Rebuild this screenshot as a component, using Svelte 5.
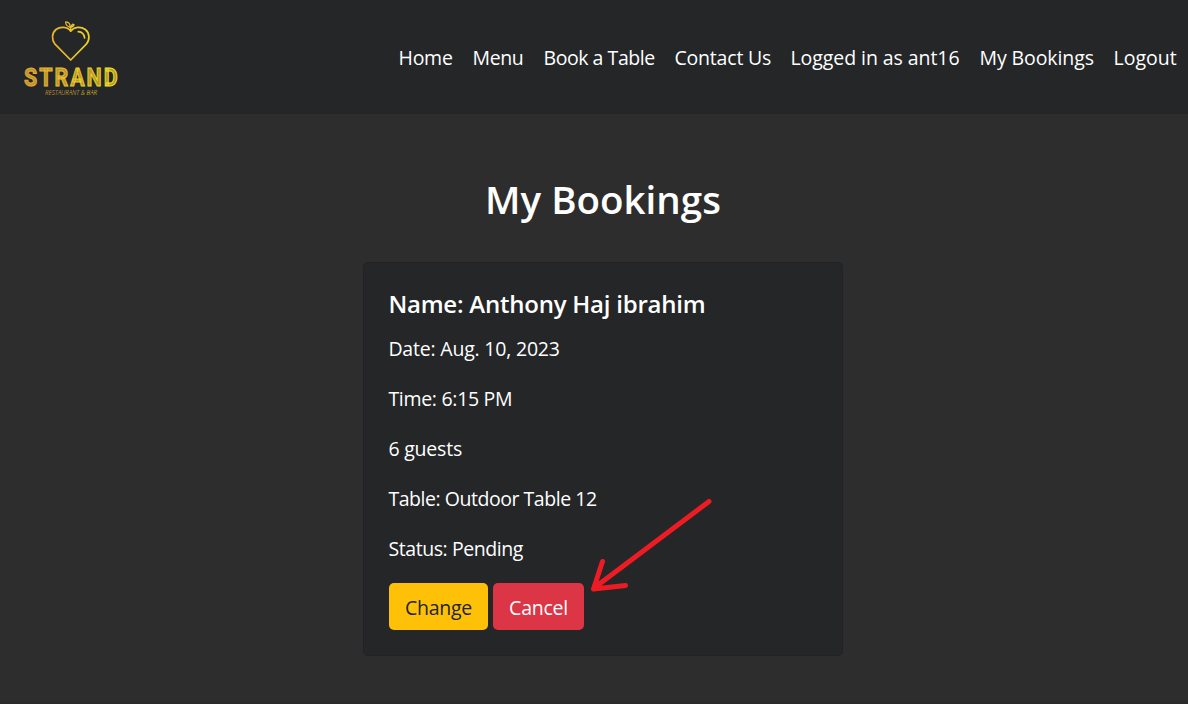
<script>
  const links = [
    { label: 'Home', width: 54, track: -0.25 },
    { label: 'Menu', width: 51, track: -0.4 },
    { label: 'Book a Table', width: 111, track: -0.45 },
    { label: 'Contact Us', width: 96, track: -0.2 },
    { label: 'Logged in as ant16', width: 169, track: -0.07 },
    { label: 'My Bookings', width: 114, track: -0.1 },
    { label: 'Logout', width: 63, track: 0 },
  ];
  const details = [
    { text: 'Date: Aug. 10, 2023', track: -0.2 },
    { text: 'Time: 6:15 PM', track: -0.3 },
    { text: '6 guests', track: -0.2 },
    { text: 'Table: Outdoor Table 12', track: -0.46 },
    { text: 'Status: Pending', track: -0.42 },
  ];
</script>

<div class="page">
  <header>
    <svg class="logo" width="140" height="114" viewBox="0 0 140 114" role="img" aria-label="Strand">
      <defs>
        <linearGradient id="gold" gradientUnits="userSpaceOnUse" x1="24" y1="0" x2="118" y2="0">
          <stop offset="0" stop-color="#ea9a35" />
          <stop offset="0.5" stop-color="#e8c12e" />
          <stop offset="1" stop-color="#f2ea24" />
        </linearGradient>
        <linearGradient id="gold-brand" gradientUnits="userSpaceOnUse" x1="0" y1="0" x2="111" y2="0">
          <stop offset="0" stop-color="#f0a038" />
          <stop offset="0.5" stop-color="#eec62e" />
          <stop offset="1" stop-color="#f4ec24" />
        </linearGradient>
      </defs>
      <g fill="none" stroke="url(#gold)" stroke-width="1.7" stroke-linecap="round" stroke-linejoin="round">
        <path d="M70.7 31.2C67.5 26.5 60 26.4 56 29.5C51.7 33 51.4 39.7 55 44.2L70.7 60L86.3 44.2C90 39.7 89.8 33 85.3 29.5C81 26.4 74 26.5 70.7 31.2Z" />
        <path d="M78.3 31.7Q83.8 32.1 84.6 37.8" />
        <path d="M70.7 30.6Q70 27 72.6 24.2M70 27.3Q65.4 26 65.7 21.9Q70.6 22.3 70 27.3ZM71.2 27.2Q72.2 23.8 74 24.5Q74 26.5 71.2 27.2" stroke-width="1.2" />
      </g>
      <g transform="translate(24 85.6) scale(0.84 1)">
        <text class="brand" x="0" y="0" textLength="111.5" fill="#b89b2a" stroke="url(#gold-brand)" stroke-width="1">STRAND</text>
      </g>
      <text class="tagline" x="45" y="95" textLength="52" lengthAdjust="spacingAndGlyphs" fill="url(#gold)">RESTAURANT &amp; BAR</text>
    </svg>
    <nav>
      {#each links as link}
        <a href="#top" style="width:{link.width}px;letter-spacing:{link.track}px">{link.label}</a>
      {/each}
    </nav>
  </header>

  <main>
    <h1>My Bookings</h1>
    <section class="card">
      <h2>Name: Anthony Haj ibrahim</h2>
      {#each details as row}
        <p><span style="letter-spacing:{row.track}px">{row.text}</span></p>
      {/each}
      <div class="actions">
        <button class="change">Change</button>
        <button class="cancel">Cancel</button>
      </div>
      <svg class="arrow" width="130" height="104" viewBox="585 495 130 104" aria-hidden="true">
        <path d="M709 501.5L594 588M602.5 561.5L593.5 589L625.5 585.5" />
      </svg>
    </section>
  </main>
  <footer></footer>
</div>

<style>
  :global(body) {
    margin: 0;
    background: #2d2d2d;
  }
  .page {
    display: flex;
    flex-direction: column;
    height: 704px;
    overflow: hidden;
    background: #2d2d2d;
    color: #fff;
    font: 19.5px/30px 'Open Sans', 'Noto Sans', sans-serif;
  }
  header {
    display: flex;
    justify-content: space-between;
    height: 114px;
    flex: none;
    background: #242628;
  }
  .logo {
    display: block;
  }
  .brand {
    font: 700 25.5px Roboto, sans-serif;
  }
  .tagline {
    font: italic 300 7.2px 'Open Sans', sans-serif;
  }
  nav {
    display: flex;
    gap: 20px;
    align-items: center;
    padding: 2px 11.5px 0 0;
    white-space: nowrap;
  }
  a {
    color: #fff;
    text-decoration: none;
  }
  main {
    flex: 1;
    display: flex;
    flex-direction: column;
    align-items: center;
    padding: 61px 0 0 18px;
  }
  h1 {
    margin: 0 0 39px;
    font-size: 38.5px;
    line-height: 48px;
    font-weight: 600;
  }
  .card {
    position: relative;
    box-sizing: border-box;
    width: 480px;
    height: 394px;
    padding: 26px 25px;
    border: 1px solid #202224;
    border-radius: 5px;
    background: #242628;
  }
  h2 {
    margin: 0 0 15px -0.6px;
    font-size: 24px;
    line-height: 30px;
    font-weight: 600;
    letter-spacing: -0.23px;
    white-space: nowrap;
  }
  p {
    margin: 0 0 20px -0.6px;
    white-space: nowrap;
  }
  .actions {
    display: flex;
    gap: 5px;
    margin-top: -1px;
  }
  button {
    height: 47px;
    padding: 2px 0 0;
    border: 0;
    border-radius: 5px;
    font: inherit;
    letter-spacing: -0.25px;
  }
  .change {
    width: 99px;
    background: #ffc107;
    color: #212529;
  }
  .cancel {
    width: 91px;
    background: #dc3545;
    color: #fff;
  }
  .arrow {
    position: absolute;
    left: 221px;
    top: 232px;
  }
  .arrow path {
    fill: none;
    stroke: #ed1c24;
    stroke-width: 5;
    stroke-linecap: round;
    stroke-linejoin: round;
  }
  footer {
    flex: none;
    height: 2px;
    background: #2b292a;
  }
</style>
